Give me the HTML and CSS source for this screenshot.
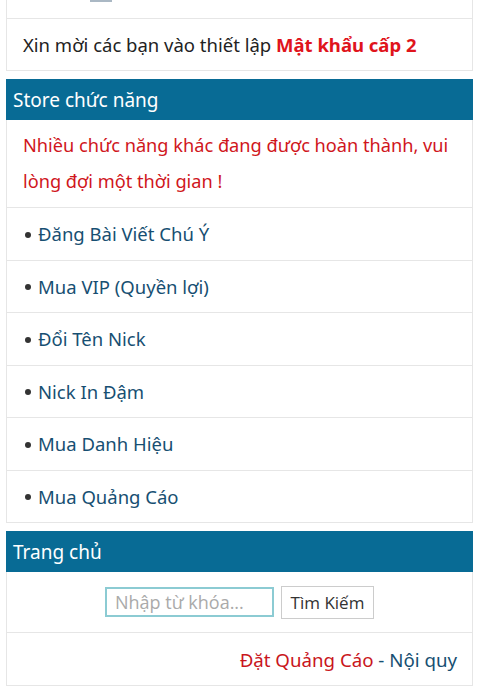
FILE: index.html
```html
<!DOCTYPE html>
<html lang="vi">
<head>
<meta charset="utf-8">
<link rel="stylesheet" href="styles.css">
</head>
<body>
<div class="wrap">
  <div class="box top-box">
    <div class="row cut-row"><span class="cut-icon"></span><span class="cut-mark"></span></div>
    <div class="row"><span>Xin mời các bạn vào thiết lập <b class="hl">Mật khẩu cấp 2</b></span></div>
  </div>
  <div class="head">Store chức năng</div>
  <div class="box">
    <div class="row notice">Nhiều chức năng khác đang được hoàn thành, vui lòng đợi một thời gian !</div>
    <div class="row item"><span class="dot"></span><a>Đăng Bài Viết Chú Ý</a></div>
    <div class="row item"><span class="dot"></span><a>Mua VIP (Quyền lợi)</a></div>
    <div class="row item"><span class="dot"></span><a>Đổi Tên Nick</a></div>
    <div class="row item"><span class="dot"></span><a>Nick In Đậm</a></div>
    <div class="row item"><span class="dot"></span><a>Mua Danh Hiệu</a></div>
    <div class="row item"><span class="dot"></span><a>Mua Quảng Cáo</a></div>
  </div>
  <div class="head">Trang chủ</div>
  <div class="box">
    <div class="row search">
      <input class="kw" type="text" placeholder="Nhập từ khóa...">
      <button class="btn">Tìm Kiếm</button>
    </div>
    <div class="row foot"><span><a class="red">Đặt Quảng Cáo</a> - <a>Nội quy</a></span></div>
  </div>
</div>
</body>
</html>
```
FILE: styles.css
```css
* { box-sizing: border-box; }
html, body { margin: 0; padding: 0; background: #fff; }
body {
  font-family: "Noto Sans", "Open Sans", sans-serif;
  font-size: 18.5px;
  color: #222;
  overflow: hidden;
}
.wrap {
  margin: 0 7px 0 6px;
}
.box {
  border: 1px solid #e6e6e6;
  border-top: none;
  background: #fff;
}
.top-box { margin-top: -34px; }
.row {
  height: 52px;
  display: flex;
  align-items: center;
  padding: 0 16px;
  border-top: 1px solid #e6e6e6;
}
.box .row:first-child { border-top: none; }
.cut-row { align-items: flex-end; padding-bottom: 16px; }
.cut-icon {
  display: inline-block;
  width: 22px; height: 3px;
  margin-left: 67px;
  background: #aab8c4;
}
.cut-mark {
  display: inline-block;
  width: 3px; height: 5px;
  margin-left: 95px;
  margin-bottom: 12px;
  background: #d9a55a;
  transform: skewX(-20deg);
}
.hl { color: #e0141c; font-weight: 700; }
.head {
  background: #086b95;
  color: #fff;
  font-size: 19px;
  height: 41px;
  display: flex;
  align-items: center;
  padding: 0 7px;
  margin-top: 8px;
}
.notice {
  height: auto;
  display: block;
  color: #d0161c;
  font-size: 18.2px;
  line-height: 36px;
  padding: 7px 16px 8px;
}
.item { height: 52.5px; padding-left: 18px; }
.dot {
  width: 6px; height: 6px;
  border-radius: 50%;
  background: #333;
  margin-right: 7px;
  margin-top: 2px;
  flex: none;
}
a { color: #174f72; text-decoration: none; }
.red { color: #c9161c; }
.search {
  height: 60px;
  justify-content: center;
  gap: 7px;
}
.kw {
  width: 169px;
  height: 30px;
  border: 2px solid #8ccbd3;
  font-family: "Open Sans", sans-serif;
  font-size: 18px;
  padding: 0 8px;
  color: #333;
  outline: none;
}
.kw::placeholder { color: #aaa; }
.btn {
  width: 93px;
  height: 33px;
  background: #fff;
  border: 1px solid #ccc;
  font-family: "Open Sans", sans-serif;
  font-size: 17px;
  color: #333;
  padding: 0;
}
.foot {
  height: 53px;
  justify-content: flex-end;
  padding-right: 15px;
  font-size: 18.7px;
  color: #174f72;
  white-space: pre;
}
```
